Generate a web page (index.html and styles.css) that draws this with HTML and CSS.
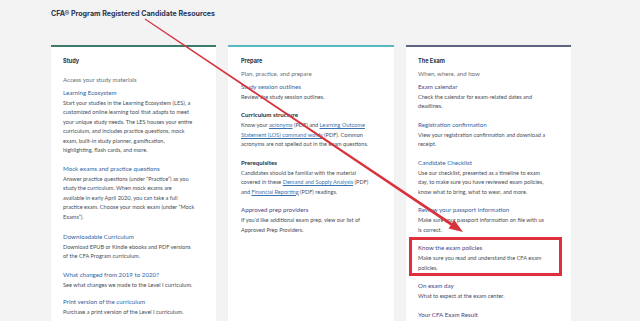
FILE: index.html
```html
<!DOCTYPE html>
<html lang="en">
<head>
<meta charset="utf-8">
<title>CFA Program Registered Candidate Resources</title>
<link rel="stylesheet" href="styles.css">
</head>
<body>
<main class="page">
  <h1 class="page-title">CFA® Program Registered Candidate Resources</h1>
  <div class="columns">
    <section class="card card-study">
      <h2 class="card-heading">Study</h2>
      <p class="card-sub card-sub-wide">Access your study materials</p>
      <div class="item first">
        <a class="item-title" href="#">Learning Ecosystem</a>
        <p class="item-text">Start your studies in the Learning Ecosystem (LES), a<br>customized online learning tool that adapts to meet<br>your unique study needs. The LES houses your entire<br>curriculum, and includes practice questions, mock<br>exam, built-in study planner, gamification,<br>highlighting, flash cards, and more.</p>
      </div>
      <div class="item">
        <a class="item-title" href="#">Mock exams and practice questions</a>
        <p class="item-text">Answer practice questions (under “Practice”) as you<br>study the curriculum. When mock exams are<br>available in early April 2020, you can take a full<br>practice exam. Choose your mock exam (under “Mock<br>Exams”).</p>
      </div>
      <div class="item gap-lg">
        <a class="item-title" href="#">Downloadable Curriculum</a>
        <p class="item-text">Download EPUB or Kindle ebooks and PDF versions<br>of the CFA Program curriculum.</p>
      </div>
      <div class="item">
        <a class="item-title" href="#">What changed from 2019 to 2020?</a>
        <p class="item-text">See what changes we made to the Level I curriculum.</p>
      </div>
      <div class="item gap-sm">
        <a class="item-title" href="#">Print version of the curriculum</a>
        <p class="item-text">Purchase a print version of the Level I curriculum.</p>
      </div>
    </section>

    <section class="card card-prepare">
      <h2 class="card-heading">Prepare</h2>
      <p class="card-sub">Plan, practice, and prepare</p>
      <div class="item first">
        <a class="item-title" href="#">Study session outlines</a>
        <p class="item-text">Review the study session outlines.</p>
      </div>
      <div class="item">
        <span class="item-title plain">Curriculum structure</span>
        <p class="item-text">Know your <a class="inline" href="#">acronyms</a> (PDF) and <a class="inline" href="#">Learning Outcome<br>Statement (LOS) command words</a> (PDF). Common<br>acronyms are not spelled out in the exam questions.</p>
      </div>
      <div class="item">
        <span class="item-title plain">Prerequisites</span>
        <p class="item-text">Candidates should be familiar with the material<br>covered in these <a class="inline" href="#">Demand and Supply Analysis</a> (PDF)<br>and <a class="inline" href="#">Financial Reporting</a> (PDF) readings.</p>
      </div>
      <div class="item">
        <a class="item-title visited" href="#">Approved prep providers</a>
        <p class="item-text">If you’d like additional exam prep, view our list of<br>Approved Prep Providers.</p>
      </div>
    </section>

    <section class="card card-exam">
      <h2 class="card-heading">The Exam</h2>
      <p class="card-sub">When, where, and how</p>
      <div class="item first">
        <a class="item-title visited" href="#">Exam calendar</a>
        <p class="item-text">Check the calendar for exam-related dates and<br>deadlines.</p>
      </div>
      <div class="item">
        <a class="item-title" href="#">Registration confirmation</a>
        <p class="item-text">View your registration confirmation and download a<br>receipt.</p>
      </div>
      <div class="item">
        <a class="item-title" href="#">Candidate Checklist</a>
        <p class="item-text">Use our checklist, presented as a timeline to exam<br>day, to make sure you have reviewed exam policies,<br>know what to bring, what to wear, and more.</p>
      </div>
      <div class="item">
        <a class="item-title" href="#">Review your passport information</a>
        <p class="item-text">Make sure your passport information on file with us<br>is correct.</p>
      </div>
      <div class="item highlighted">
        <a class="item-title visited" href="#">Know the exam policies</a>
        <p class="item-text">Make sure you read and understand the CFA exam<br>policies.</p>
      </div>
      <div class="item">
        <a class="item-title visited" href="#">On exam day</a>
        <p class="item-text">What to expect at the exam center.</p>
      </div>
      <div class="item">
        <a class="item-title visited" href="#">Your CFA Exam Result</a>
        <p class="item-text">Access your December 2019 or June 2019 exam<br>result.</p>
      </div>
    </section>
  </div>
</main>
<svg class="annotation" width="640" height="321" viewBox="0 0 640 321" aria-hidden="true">
  <polygon fill="#d8323c" points="145.3,18.6 452.2,222.9 454.2,220.0 463,232 448.6,228.4 450.6,225.5 144.7,19.4"/>
</svg>
</body>
</html>
```

FILE: styles.css
```css
* { box-sizing: border-box; }

html, body {
  margin: 0;
  padding: 0;
}

body {
  width: 640px;
  height: 321px;
  overflow: hidden;
  background: #f3f3f4;
  font-family: Lato, "Liberation Sans", sans-serif;
  color: #454a52;
  position: relative;
}

.page {
  padding: 0 0 0 51px;
}

.page-title {
  margin: 0;
  padding-top: 9px;
  height: 45px;
  font-family: Inter, "Open Sans", sans-serif;
  font-size: 7.1px;
  line-height: 10px;
  font-weight: 700;
  color: #2a3756;
}

.columns {
  display: flex;
  gap: 12px;
  align-items: stretch;
}

.card {
  width: 165px;
  height: 300px;
  background: #ffffff;
  border-top: 2px solid #3e7a6c;
  padding: 10px 12px 0 12px;
  box-shadow: 0 0 1px rgba(0,0,0,0.06);
}

.card-prepare {
  border-top-color: #58b9c2;
  padding-left: 13px;
  width: 166px;
}

.card-exam {
  border-top-color: #5e6480;
}

.card-heading {
  margin: 0;
  font-family: Inter, "Open Sans", sans-serif;
  font-size: 5.6px;
  line-height: 9.5px;
  font-weight: 700;
  color: #2a3448;
}

.card-sub {
  margin: 1px 0 0 0;
  font-size: 6.1px;
  line-height: 11px;
  font-weight: 400;
  color: #6a6e75;
}

.card-sub-wide {
  margin-top: 7px;
}

.item {
  margin-top: 9px;
}

.item.first {
  margin-top: 3px;
}

.item.gap-lg { margin-top: 10.5px; }
.item.gap-sm { margin-top: 8px; }

.item-title {
  display: block;
  font-size: 6.2px;
  line-height: 9.5px;
  color: #2f64a3;
  text-decoration: none;
}

.item-title.visited {
  color: #4b4384;
}

.item-title.plain {
  color: #2b2f36;
  font-weight: 700;
}

.item-text {
  margin: 0.5px 0 0 0;
  font-size: 5.6px;
  line-height: 9.5px;
  color: #4a4e55;
  white-space: nowrap;
}

.inline {
  color: #3a73b0;
  text-decoration: underline;
}

.highlighted {
  position: relative;
}

.highlighted::before {
  content: "";
  position: absolute;
  left: -9px;
  right: -3px;
  top: -6px;
  bottom: -4px;
  border: 3px solid #de2f3a;
  pointer-events: none;
}

.annotation {
  position: absolute;
  left: 0;
  top: 0;
  pointer-events: none;
}
```
